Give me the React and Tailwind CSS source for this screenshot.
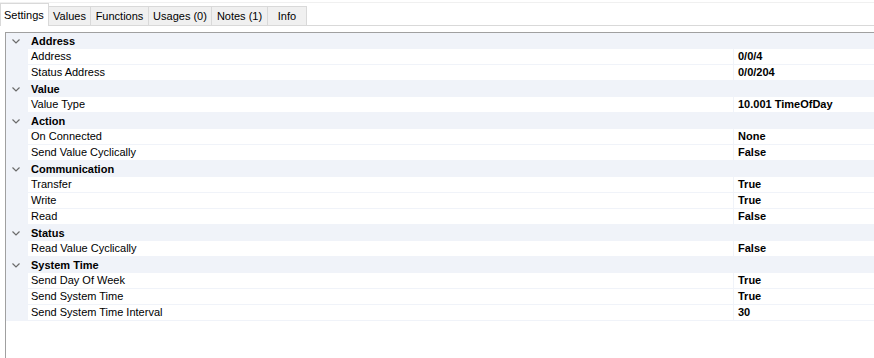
import React from "react";

const tabs = [
  { label: "Settings", w: 49 },
  { label: "Values", w: 42 },
  { label: "Functions", w: 58 },
  { label: "Usages (0)", w: 63 },
  { label: "Notes (1)", w: 56 },
  { label: "Info", w: 39 },
];

const groups = [
  { name: "Address", rows: [["Address", "0/0/4"], ["Status Address", "0/0/204"]] },
  { name: "Value", rows: [["Value Type", "10.001 TimeOfDay"]] },
  { name: "Action", rows: [["On Connected", "None"], ["Send Value Cyclically", "False"]] },
  { name: "Communication", rows: [["Transfer", "True"], ["Write", "True"], ["Read", "False"]] },
  { name: "Status", rows: [["Read Value Cyclically", "False"]] },
  {
    name: "System Time",
    rows: [
      ["Send Day Of Week", "True"],
      ["Send System Time", "True"],
      ["Send System Time Interval", "30"],
    ],
  },
];

function Chevron() {
  return (
    <svg width="8" height="5" viewBox="0 0 8 5" className="ml-[6px] mr-[11px]">
      <path d="M0.5 0.5 L4 4 L7.5 0.5" fill="none" stroke="#6b6b6b" strokeWidth="1.2" />
    </svg>
  );
}

export default function App() {
  return (
    <div
      className="w-[874px] h-[358px] bg-white overflow-hidden text-[11px] text-black"
      style={{ fontFamily: '"Liberation Sans", Arial, sans-serif' }}
    >
      {/* Tab strip */}
      <div className="h-[3px] border-b border-[#f0f0f0]" />
      <div className="flex items-end h-[23px] border-b border-[#d9d9d9]">
        {tabs.map((t, i) =>
          i === 0 ? (
            <div
              key={t.label}
              className="h-[23px] -mb-px bg-white border border-b-0 border-[#d9d9d9] flex items-center pl-[3px] relative z-10"
              style={{ width: t.w }}
            >
              {t.label}
            </div>
          ) : (
            <div
              key={t.label}
              className="h-[19px] bg-[#f0f0f0] border-t border-r border-[#d9d9d9] flex items-center justify-center"
              style={{ width: t.w }}
            >
              {t.label}
            </div>
          )
        )}
      </div>

      {/* Property grid */}
      <div className="mt-[6px] ml-[5px] border-t border-l border-[#a0a0a0] h-[400px]">
        {groups.map((g) => (
          <div key={g.name}>
            <div className="h-[16px] bg-[#f0f3f9] flex items-center font-bold">
              <Chevron />
              {g.name}
            </div>
            {g.rows.map(([k, v]) => (
              <div key={k} className="h-[16px] flex bg-[#f0f3f9] pl-[22px]">
                <div className="flex-1 flex bg-white mb-px">
                  <div className="w-[706px] pl-[3px] leading-[15px] border-r border-[#f0f3f9]">{k}</div>
                  <div className="flex-1 pl-[4px] leading-[15px] font-bold">{v}</div>
                </div>
              </div>
            ))}
          </div>
        ))}
      </div>
    </div>
  );
}
